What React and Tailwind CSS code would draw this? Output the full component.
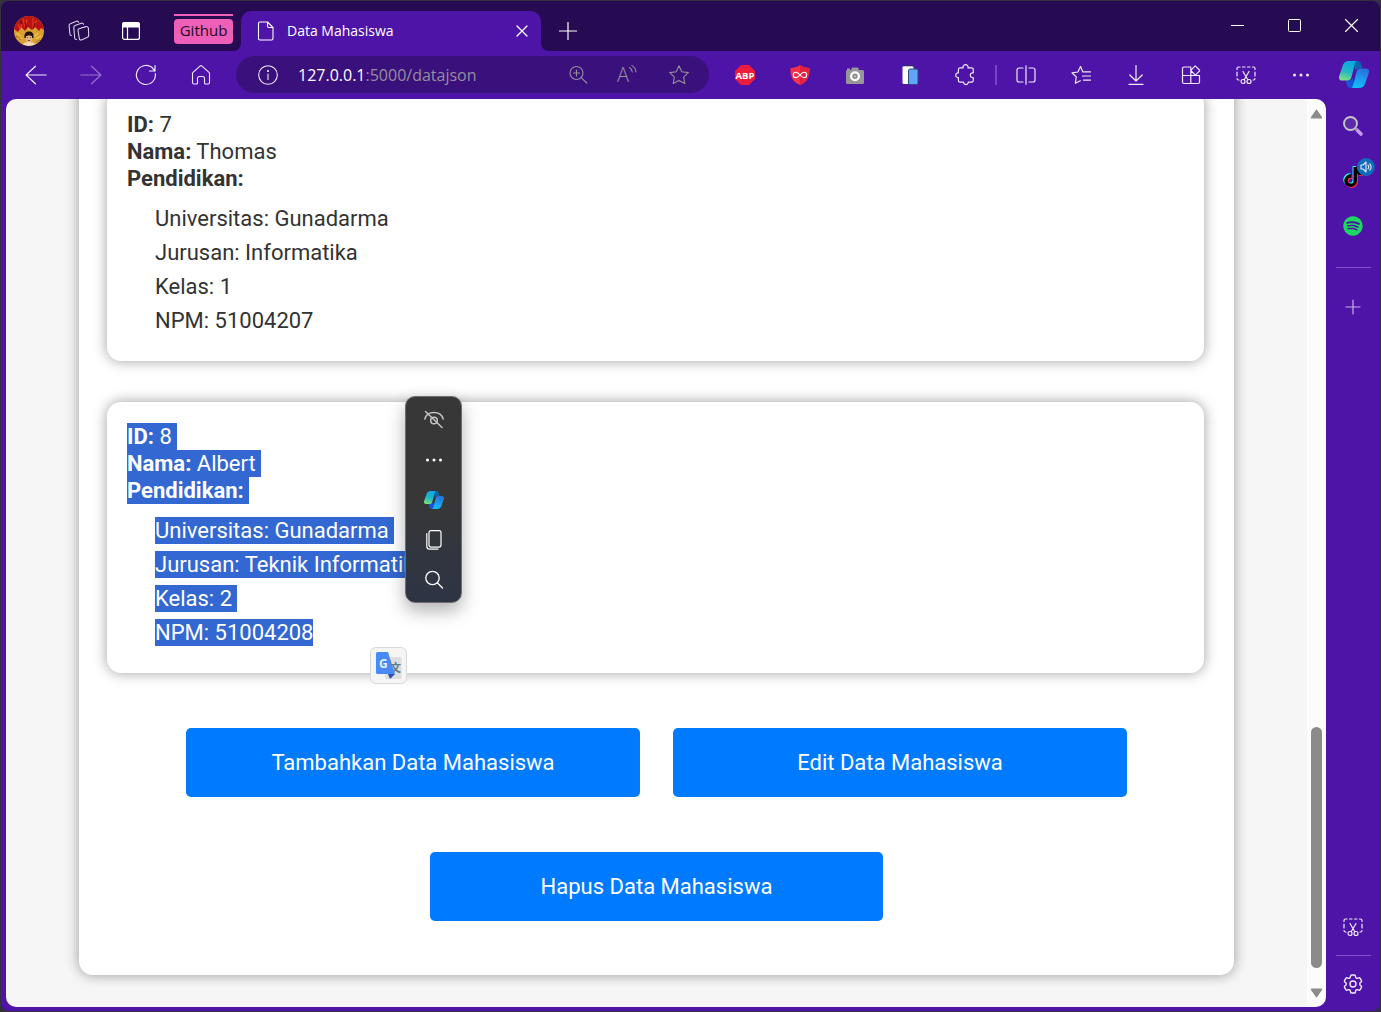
import React, { useId } from "react";
import { FaSpotify, FaTiktok } from "react-icons/fa6";
import { HiOutlineCog6Tooth } from "react-icons/hi2";

const Icon = ({ size = 20, box = 20, sw = 1.1, className = "", children }) => (
  <svg
    width={size}
    height={size}
    viewBox={`0 0 ${box} ${box}`}
    fill="none"
    stroke="currentColor"
    strokeWidth={sw}
    strokeLinecap="round"
    strokeLinejoin="round"
    className={className}
    aria-hidden="true"
  >
    {children}
  </svg>
);

function Copilot({ className }) {
  const id = useId();
  return (
    <svg viewBox="0 0 30 27" className={className} aria-hidden="true">
      <defs>
        <linearGradient id={id + "a"} x1="0.6" y1="0" x2="0.3" y2="1">
          <stop offset="0" stopColor="#0fa5e6" />
          <stop offset="0.55" stopColor="#22b8c4" />
          <stop offset="1" stopColor="#7be27c" />
        </linearGradient>
        <linearGradient id={id + "b"} x1="0.7" y1="0" x2="0.4" y2="1">
          <stop offset="0" stopColor="#2a6fdc" />
          <stop offset="1" stopColor="#12bdfb" />
        </linearGradient>
      </defs>
      <path d="M14 0h4.500c2 0 3 1 3.600 3l1.200 4.500H20c-2 0-3 1-3.600 3z" fill="#0a64ae" />
      <path d="M16 27h-4.500c-2 0-3-1-3.600-3l-1.200-4.500H10c2 0 3-1 3.600-3z" fill="#1556d8" />
      <path d="M10 0h8.500c-1.500 0-2 1-2.500 2.600L12.500 16c-.7 2.300-1.600 3.500-4 3.500H3c-2.500 0-3.500-2-2.800-4.400L4 4C5 1.500 7 0 10 0z" fill={`url(#${id}a)`} />
      <path d="M20 27h-8.500c1.500 0 2-1 2.500-2.600L17.500 11c.7-2.300 1.600-3.500 4-3.500H27c2.500 0 3.500 2 2.800 4.400L26 23c-1 2.500-3 4-6 4z" fill={`url(#${id}b)`} />
    </svg>
  );
}

const Avatar = () => (
  <svg viewBox="0 0 30 30" className="size-[30px] rounded-full" aria-hidden="true">
    <rect width="30" height="30" fill="#d9a032" />
    <path d="M0 0h30v14l-3-2-2 3-4-4-3 3-4-3-3 4-4-4-3 5-4-3z" fill="#b91317" />
    <path d="M9 3l2 8 2-8M19 2v9l4-7M4 8l2 5 2-5" stroke="#e83a18" strokeWidth="1.200" fill="none" />
    <path d="M11 6l1 6M21 7l-2 6M6 4l2 4" stroke="#5f0d12" strokeWidth="1" />
    <path d="M2 17l5 3M24 17l-4 4M27 20l-5 3M3 23l6-1" stroke="#eec449" strokeWidth="1.200" />
    <path d="M2 20l5 4M26 24l-4 2" stroke="#a8761f" strokeWidth="1" />
    <path d="M10.500 22c-.5-5 1.500-6.500 4.500-6.500s5 1.500 4.500 6.500z" fill="#25110d" />
    <ellipse cx="15" cy="22" rx="3.200" ry="4.300" fill="#e5b48c" />
    <path d="M8 30c1-3.500 4-4 7-4s6 .5 7 4z" fill="#f1d8b5" />
    <path d="M11 21c.5-3 2-4 4-4s3.500 1 4 4c-2-2-6-2-8 0z" fill="#25110d" />
    <path d="M13 21.700h1M16 21.700h1M14 24.500h2" stroke="#5a2618" strokeWidth=".8" />
  </svg>
);

const Snip = () => (
  <Icon sw={1.2}>
    <path d="M3 15H2.500A1.500 1.500 0 0 1 1 13.500M1 11V7M1 4.500v-1A1.500 1.500 0 0 1 2.500 2H4M6.500 2h2.500M11.500 2h2.500M16.500 2h1A1.500 1.500 0 0 1 19 3.500v1M19 7v4M19 13.500a1.500 1.500 0 0 1-1.500 1.500H17" />
    <path d="M7 6.500l4.800 8.300M13 6.500l-4.800 8.300" />
    <circle cx="7" cy="16.500" r="2" />
    <circle cx="13" cy="16.500" r="2" />
  </Icon>
);

const Star = () => (
  <Icon size={22} box={22}>
    <path d="M11 1.800l2.800 5.900 6.500.9-4.700 4.500 1.200 6.400-5.800-3.100-5.800 3.100 1.200-6.400L1.700 8.600l6.500-.9z" />
  </Icon>
);

const Puzzle = () => (
  <Icon size={22} box={20}>
    <path d="M5.500 3.500h2.800a2.300 2.300 0 1 1 4.400 0H16A1.500 1.500 0 0 1 17.500 5v3h-1a2.200 2.200 0 0 0 0 4.300h1V15a1.500 1.500 0 0 1-1.500 1.500h-3v.5a2.200 2.200 0 0 1-4.300 0v-.5H5.500A1.500 1.500 0 0 1 4 15v-2.700h-.700a2.200 2.200 0 0 1 0-4.300H4V5a1.500 1.500 0 0 1 1.500-1.500z" />
  </Icon>
);

const Abp = () => (
  <svg viewBox="0 0 20 20" className="size-5" aria-hidden="true">
    <path d="M6 0h8l6 6v8l-6 6H6l-6-6V6z" fill="#ed1c3c" />
    <text x="10" y="13.500" textAnchor="middle" fontSize="9.500" fontWeight="700" fill="#fff" fontFamily="Open Sans, sans-serif">ABP</text>
  </svg>
);

const Shield = () => (
  <svg viewBox="0 0 20 20" className="size-5" aria-hidden="true">
    <path d="M10 0c3 2.200 6 3 9.500 3 .5 8-2 14-9.500 17C2.500 17 0 11 .5 3 4 3 7 2.200 10 0z" fill="#f4304b" />
    <path d="M10 0c3 2.200 6 3 9.500 3 .5 8-2 14-9.500 17z" fill="#e3203f" />
    <path d="M10 10C8.500 8 7.500 7.200 6 7.200a2.700 2.700 0 0 0 0 5.400c1.500 0 2.500-.7 4-2.600s2.500-2.800 4-2.800a2.700 2.700 0 0 1 0 5.400c-1.500 0-2.500-.7-4-2.600z" fill="none" stroke="#fff" strokeWidth="1.100" />
  </svg>
);

const Camera = () => (
  <svg viewBox="0 0 20 20" className="size-5" aria-hidden="true">
    <path d="M7 2.500h6l1 2.500h3.500A1.500 1.500 0 0 1 19 6.500v11a1.500 1.500 0 0 1-1.500 1.500h-15A1.500 1.500 0 0 1 1 17.500v-11A1.500 1.500 0 0 1 2.500 5H6z" fill="#979797" />
    <rect x="2" y="3.500" width="3" height="2" fill="#979797" />
    <circle cx="10" cy="11.300" r="5" fill="#fff" />
    <circle cx="10" cy="11.300" r="2.700" fill="#8a8a8a" />
    <circle cx="10" cy="11.300" r="1.200" fill="#b5b5b5" />
  </svg>
);

const Devices = () => (
  <svg viewBox="0 0 20 20" className="size-5" aria-hidden="true">
    <rect x="2.500" y="1" width="11" height="18" rx="1.500" fill="#fff" />
    <path d="M3 .8h10" stroke="#2c3350" strokeWidth="1" />
    <rect x="8.500" y="4" width="9.500" height="15.500" rx="1.500" fill="#60a5f6" stroke="#2d4b80" strokeWidth="1" />
  </svg>
);

const SearchLens = () => (
  <svg viewBox="0 0 22 22" className="size-[22px]" aria-hidden="true">
    <path d="M15 15l4 4" stroke="#c59bf2" strokeWidth="3.600" strokeLinecap="round" />
    <path d="M13 13l2 2" stroke="#9a8bb5" strokeWidth="1.800" />
    <circle cx="8.500" cy="8.500" r="6.500" fill="#5c2aa8" stroke="#c6c3c4" strokeWidth="1.900" />
  </svg>
);

const Tool = ({ label, children, className = "" }) => (
  <button aria-label={label} className={"flex w-[55px] shrink-0 items-center justify-center " + className}>
    {children}
  </button>
);

const TabBar = () => (
  <header className="flex h-[50px] shrink-0 justify-between bg-[#260a52] text-white">
    <div className="mt-[10px] flex h-10 items-center">
      <button aria-label="Profil" className="ml-[13px]"><Avatar /></button>
      <button aria-label="Workspaces" className="ml-6 text-[#d9d2e6]">
        <Icon size={22} box={22}>
          <path d="M11 8.700l6.800-2.100a2 2 0 0 1 2.600 1.800l.3 7a2 2 0 0 1-1.300 1.900l-6 2.600a1.500 1.500 0 0 1-2.100-1.300L10 10.300c0-.8.300-1.400 1-1.600z" />
          <path d="M15.500 4.200a1.700 1.700 0 0 0-2.200-1L7 5.500a2 2 0 0 0-1.200 2l.9 10.500c.1 1 .8 1.700 1.800 1.500" />
          <path d="M10.600 2.200a1.600 1.600 0 0 0-2.100-.9L2.300 3.700a2 2 0 0 0-1.200 2l.8 8.300c.1 1 .7 1.500 1.500 1.500" />
        </Icon>
      </button>
      <button aria-label="Tab vertikal" className="ml-8">
        <Icon size={18} box={18} sw={1.2}>
          <rect x=".6" y=".6" width="16.800" height="16.800" rx="2" />
          <path d="M.6 2.500A2 2 0 0 1 2.600.6h12.800a2 2 0 0 1 2 2V5H.6z" fill="currentColor" />
          <path d="M5.500 5v12.400" />
        </Icon>
      </button>
      <div className="ml-[34px] flex h-full w-[59px] flex-col gap-[3px] pt-[3px]">
        <span className="h-0.5 bg-[#ee5fb7]" />
        <button className="h-[25px] rounded bg-[#ee5fb7] text-[15px] leading-[22px] text-[#1d0b25]"><span className="block h-full">Github</span></button>
      </div>
      <span className="size-2 self-end bg-[#4e14a8]"><span className="block size-full rounded-br-lg bg-[#260a52]" /></span>
      <div className="flex h-full w-[300px] items-center rounded-t-[10px] bg-[#4e14a8] pr-[13px] pl-[15px]">
        <Icon size={20} className="shrink-0">
          <path d="M4 1h7.500L17 6.500V17.500A1.500 1.500 0 0 1 15.500 19H4a1.500 1.500 0 0 1-1.500-1.500v-15A1.500 1.500 0 0 1 4 1zM11.500 1v4a1.500 1.500 0 0 0 1.500 1.500h4" />
        </Icon>
        <button className="ml-[11px] flex-1 pb-0.5 text-left text-[14px]">Data Mahasiswa</button>
        <button aria-label="Tutup tab">
          <Icon size={12} box={12} sw={1.3}><path d="M1 1l10 10M11 1L1 11" /></Icon>
        </button>
      </div>
      <span className="size-2 self-end bg-[#4e14a8]"><span className="block size-full rounded-bl-lg bg-[#260a52]" /></span>
      <button aria-label="Tab baru" className="ml-[10px]">
        <Icon size={18} box={18} sw={1.2}><path d="M9 .5v17M.5 9h17" /></Icon>
      </button>
    </div>
    <div className="flex pb-0.5">
      <button aria-label="Minimalkan" className="flex w-[57px] items-center justify-center">
        <Icon size={13} box={13} sw={1}><path d="M0 6.500h13" /></Icon>
      </button>
      <button aria-label="Maksimalkan" className="flex w-[57px] items-center justify-center">
        <Icon size={13} box={13} sw={1}><rect x=".5" y=".5" width="12" height="12" rx="1" /></Icon>
      </button>
      <button aria-label="Tutup" className="flex w-[57px] items-center justify-center">
        <Icon size={13} box={13} sw={1.1}><path d="M.5.5l12 12M12.500.5l-12 12" /></Icon>
      </button>
    </div>
  </header>
);

const Toolbar = () => (
  <nav className="flex h-12 shrink-0 bg-[#4e14a8] pl-[7px] text-[#efe9f8]">
    <Tool label="Kembali"><Icon size={22} box={20}><path d="M19.300 10H1M9.500 2L1 10l8.500 8" /></Icon></Tool>
    <Tool label="Maju" className="text-[#9470cb]"><Icon size={22} box={20}><path d="M.7 10H19M10.500 2l8.500 8-8.500 8" /></Icon></Tool>
    <Tool label="Muat ulang">
      <Icon size={22} box={22} sw={1.2}><path d="M20.300 9.500a9.500 9.500 0 1 1-2-4.500L20 7M20 1.500V7h-5.500" /></Icon>
    </Tool>
    <Tool label="Beranda">
      <Icon><path d="M1.500 8.500c0-.5.200-.8.500-1.100l7-6.300a1.500 1.500 0 0 1 2 0l7 6.300c.3.300.5.600.5 1.100v9A1.500 1.500 0 0 1 17 19h-2.500a1 1 0 0 1-1-1v-4.500a2 2 0 0 0-2-2h-3a2 2 0 0 0-2 2V18a1 1 0 0 1-1 1H3a1.500 1.500 0 0 1-1.500-1.500z" /></Icon>
    </Tool>
    <div className="mt-[5px] mr-2 ml-2 flex h-[37px] min-w-0 flex-1 items-center rounded-full bg-[#3a107c] pr-[19px] pl-[22px] text-[#958f9b]">
      <button aria-label="Informasi situs" className="text-[#efe9f8]">
        <Icon><circle cx="10" cy="10" r="9.300" /><path d="M10 9v5.500" /><circle cx="10" cy="6" r=".5" fill="currentColor" /></Icon>
      </button>
      <label htmlFor="address" className="ml-5 text-[16px] text-white">127.0.0.1</label>
      <input id="address" defaultValue=":5000/datajson" className="min-w-0 flex-1 bg-transparent text-[16px] outline-none" />
      <div className="flex items-center gap-[29px]">
        <button aria-label="Zoom">
          <Icon><circle cx="8.500" cy="8" r="6.500" /><path d="M13.300 12.800l5.500 5.200M5.500 8h6M8.500 5v6" /></Icon>
        </button>
        <button aria-label="Baca nyaring" className="flex h-[30px] w-[22px]">
          <span className="text-[20px] leading-[30px] font-light">A</span>
          <Icon size={8} box={8} className="mt-[5px] shrink-0"><path d="M.6 2.500c1.500 1 2.300 2.500 2.700 4.500M3 .6c2.500 1.500 3.700 3.500 4 6.400" /></Icon>
        </button>
        <button aria-label="Favorit"><Star /></button>
      </div>
    </div>
    <Tool label="Adblock Plus"><Abp /></Tool>
    <Tool label="Perisai"><Shield /></Tool>
    <Tool label="Tangkapan layar"><Camera /></Tool>
    <Tool label="Perangkat"><Devices /></Tool>
    <Tool label="Ekstensi"><Puzzle /></Tool>
    <span className="mr-px ml-[3px] h-5 w-0.5 self-center bg-[#7644c4]" />
    <Tool label="Layar terpisah">
      <Icon sw={1.2}><path d="M7 3H3a2 2 0 0 0-2 2v10a2 2 0 0 0 2 2h4M13 3h4a2 2 0 0 1 2 2v10a2 2 0 0 1-2 2h-4M10 .8v18.400" /></Icon>
    </Tool>
    <Tool label="Daftar favorit">
      <Icon sw={1.2}><path d="M12.500 7l-.700-.200L9.500 1.500 6.900 7 1 7.800l4.300 4.200-1 6.300 5-2.600M12.800 6.800h6.700M11.500 11h8M12.500 15.200h7" /></Icon>
    </Tool>
    <Tool label="Unduhan">
      <Icon sw={1.2}><path d="M10 .5V16M3.800 10L10 16l6.200-6M3 19.300h14" /></Icon>
    </Tool>
    <Tool label="Aplikasi">
      <Icon sw={1.2}><path d="M9.500 2H3a1.500 1.500 0 0 0-1.500 1.500V17A1.500 1.500 0 0 0 3 18.500h14a1.500 1.500 0 0 0 1.500-1.500v-6.500h-17M9.800 2v16.500M14.700 1.300l3.700 3.700a.8.800 0 0 1 0 1.100l-3.500 3.500a.8.800 0 0 1-1.100 0L10.300 6a.8.800 0 0 1 0-1.100l3.400-3.600a.8.800 0 0 1 1 0z" /></Icon>
    </Tool>
    <Tool label="Cuplikan"><Snip /></Tool>
    <Tool label="Menu">
      <Icon><g fill="currentColor" stroke="none"><circle cx="3.500" cy="10" r="1.500" /><circle cx="10" cy="10" r="1.500" /><circle cx="16.500" cy="10" r="1.500" /></g></Icon>
    </Tool>
    <button aria-label="Copilot" className="flex w-[52px] shrink-0 items-center justify-center pb-0.5"><Copilot className="h-[27px] w-[30px]" /></button>
  </nav>
);

const Sidebar = () => (
  <aside className="flex w-[54px] shrink-0 flex-col items-center pt-0.5 text-[#efe9f8]">
    <button aria-label="Cari" className="flex h-[50px] items-center"><SearchLens /></button>
    <button aria-label="TikTok" className="relative flex h-[50px] w-full items-center justify-center pt-0.5">
      <span className="relative size-5">
        <FaTiktok className="absolute -top-px -left-px size-5 text-[#25f4ee]" />
        <FaTiktok className="absolute top-px left-px size-5 text-[#fe2c55]" />
        <FaTiktok className="absolute top-0 left-0 size-5 text-black" />
      </span>
      <span className="absolute top-[7px] right-[5px] flex size-[18px] items-center justify-center rounded-full bg-[#0f6cbd]">
        <Icon size={12} box={12}><path d="M1 4h2l3-3v10L3 8H1zM8 4.200c.8 1 .8 2.600 0 3.600M9.800 2.800c1.500 1.800 1.500 4.600 0 6.400" /></Icon>
      </span>
    </button>
    <button aria-label="Spotify" className="flex h-[50px] items-center"><FaSpotify className="size-5 text-[#1ed760]" /></button>
    <hr className="mt-4 w-[35px] border-[#8150c8]" />
    <button aria-label="Tambah" className="mt-[31px] text-[#c3aee6]">
      <Icon size={16} box={16} sw={1.2}><path d="M8 1v14M1 8h14" /></Icon>
    </button>
    <button aria-label="Cuplikan" className="mt-auto"><Snip /></button>
    <hr className="mt-[18px] w-[35px] border-[#8150c8]" />
    <button aria-label="Setelan" className="mt-4 mb-[11px]"><HiOutlineCog6Tooth className="size-6 stroke-[1.4]" /></button>
  </aside>
);

const Scrollbar = () => (
  <div className="flex w-[19px] shrink-0 flex-col items-center bg-[#fcfcfc] pt-[10px] pb-[9px]" aria-hidden="true">
    <svg width="13" height="10" viewBox="0 0 13 10"><path d="M6.500 1.300L11.500 8.700h-10z" fill="#8b8b8b" stroke="#8b8b8b" strokeWidth="1.500" strokeLinejoin="round" /></svg>
    <span className="mt-auto mb-[20px] h-[241px] w-[11px] rounded-full bg-[#8b8b8b]" />
    <svg width="13" height="10" viewBox="0 0 13 10"><path d="M6.500 8.700L11.500 1.300h-10z" fill="#8b8b8b" stroke="#8b8b8b" strokeWidth="1.500" strokeLinejoin="round" /></svg>
  </div>
);

const Line = ({ label, value, selected, last }) => (
  <span className={selected ? (last ? "inline-block bg-[#3367d1] text-white" : "inline-block bg-[#3367d1] pr-[5px] text-white") : "inline-block"}>
    {label}{value && " " + value}
  </span>
);

function Student({ id, nama, detail, selected, children }) {
  return (
    <article className="relative rounded-[14px] bg-white px-5 pt-[21px] pb-[27px] shadow-[0_0_14px_rgba(0,0,0,0.38)]">
      <p><Line label={<b>ID:</b>} value={id} selected={selected} /></p>
      <p><Line label={<b>Nama:</b>} value={nama} selected={selected} /></p>
      <p><Line label={<b>Pendidikan:</b>} selected={selected} /></p>
      <ul className="mt-[13px] flex flex-col gap-[7px] pl-7">
        {detail.map(([k, v], i) => (
          <li key={k} className="h-[27px]"><Line label={k + ":"} value={v} selected={selected} last={i === detail.length - 1} /></li>
        ))}
      </ul>
      {children}
    </article>
  );
}

const SelectionMenu = () => (
  <div className="absolute -top-[6px] left-[298px] flex h-[207px] w-[57px] flex-col items-center rounded-[10px] border border-[#6e6e6e] bg-linear-to-b from-[#373737] from-50% to-[#2d3444] pt-[3px] text-white shadow-[0_8px_18px_rgba(0,0,0,0.3)]">
    <button aria-label="Sembunyikan" className="flex h-10 items-center text-[#c4c4c4]">
      <Icon sw={1.5}><path d="M.8 9C2 4.800 5.500 2.500 10 2.500s8 2.300 9.200 6.500M1.500 1.500l16.500 16" /><circle cx="10" cy="10.500" r="3.300" /></Icon>
    </button>
    <button aria-label="Lainnya" className="flex h-10 items-center">
      <Icon><g fill="currentColor" stroke="none"><circle cx="3.500" cy="10" r="1.500" /><circle cx="10" cy="10" r="1.500" /><circle cx="16.500" cy="10" r="1.500" /></g></Icon>
    </button>
    <button aria-label="Tanya Copilot" className="flex h-10 items-center"><Copilot className="h-[18px] w-5" /></button>
    <button aria-label="Salin" className="flex h-10 items-center">
      <Icon sw={1.2}><rect x="5" y=".6" width="12" height="16.500" rx="2" /><path d="M2.800 3.500v12.700a3 3 0 0 0 3 3H14" /></Icon>
    </button>
    <button aria-label="Telusuri" className="flex h-10 items-center">
      <Icon sw={1.3}><circle cx="8.500" cy="8" r="6.700" /><path d="M13.300 12.800L18.500 18" /></Icon>
    </button>
  </div>
);

const TranslateButton = () => (
  <button aria-label="Terjemahkan" className="absolute top-[245px] left-[263px] flex size-[37px] items-center justify-center rounded-md border border-[#dadada] bg-[#f5f5f5]">
    <svg viewBox="0 0 27 27" className="size-[27px]" aria-hidden="true">
      <rect x="10" y="5" width="16.500" height="22" rx="1.500" fill="#dedede" />
      <text x="15" y="20" fontSize="11" fontWeight="700" fill="#5f7d86" fontFamily="Noto Sans CJK SC, sans-serif">文</text>
      <path d="M13 22h7l-5 5z" fill="#2f4fb8" />
      <path d="M2.500 0H13l7 22H2.500A1.500 1.500 0 0 1 1 20.500v-19A1.500 1.500 0 0 1 2.500 0z" fill="#4a8af4" />
      <text x="4" y="15.500" fontSize="12" fontWeight="700" fill="#e6effd" fontFamily="Open Sans, sans-serif">G</text>
    </svg>
  </button>
);

const action = "rounded-[5px] bg-[#007bff] py-[21px] text-white";

const Page = () => (
  <main className="flex-1 overflow-hidden bg-[#f6f6f6] font-[Roboto,sans-serif] text-[22px] leading-[27px] text-[#333]">
    <div className="mx-[73px] -mt-10 rounded-[14px] bg-white pt-[31px] pr-[30px] pb-[54px] pl-7 shadow-[0_0_14px_rgba(0,0,0,0.38)]">
      <div className="flex flex-col gap-[41px]">
        <Student id="7" nama="Thomas" detail={[["Universitas", "Gunadarma"], ["Jurusan", "Informatika"], ["Kelas", "1"], ["NPM", "51004207"]]} />
        <Student id="8" nama="Albert" selected detail={[["Universitas", "Gunadarma"], ["Jurusan", "Teknik Informatika"], ["Kelas", "2"], ["NPM", "51004208"]]}>
          <SelectionMenu />
          <TranslateButton />
        </Student>
      </div>
      <div className="mt-[55px] grid grid-cols-2 gap-x-[33px] gap-y-[55px] pr-[77px] pl-[79px]">
        <button className={action}>Tambahkan Data Mahasiswa</button>
        <button className={action}>Edit Data Mahasiswa</button>
        <button className={action + " col-span-2 w-[calc(50%-17px)] justify-self-center"}>Hapus Data Mahasiswa</button>
      </div>
    </div>
  </main>
);

export default function App() {
  return (
    <div className="h-screen bg-[#34313c] p-px font-['Open_Sans','Noto_Sans',sans-serif]">
      <div className="flex h-full flex-col overflow-hidden rounded-lg bg-[#4e14a8]">
        <TabBar />
        <Toolbar />
        <div className="flex min-h-0 flex-1 pb-1 pl-[5px]">
          <div className="flex min-w-0 flex-1 overflow-hidden rounded-[10px]">
            <Page />
            <Scrollbar />
          </div>
          <Sidebar />
        </div>
      </div>
    </div>
  );
}
